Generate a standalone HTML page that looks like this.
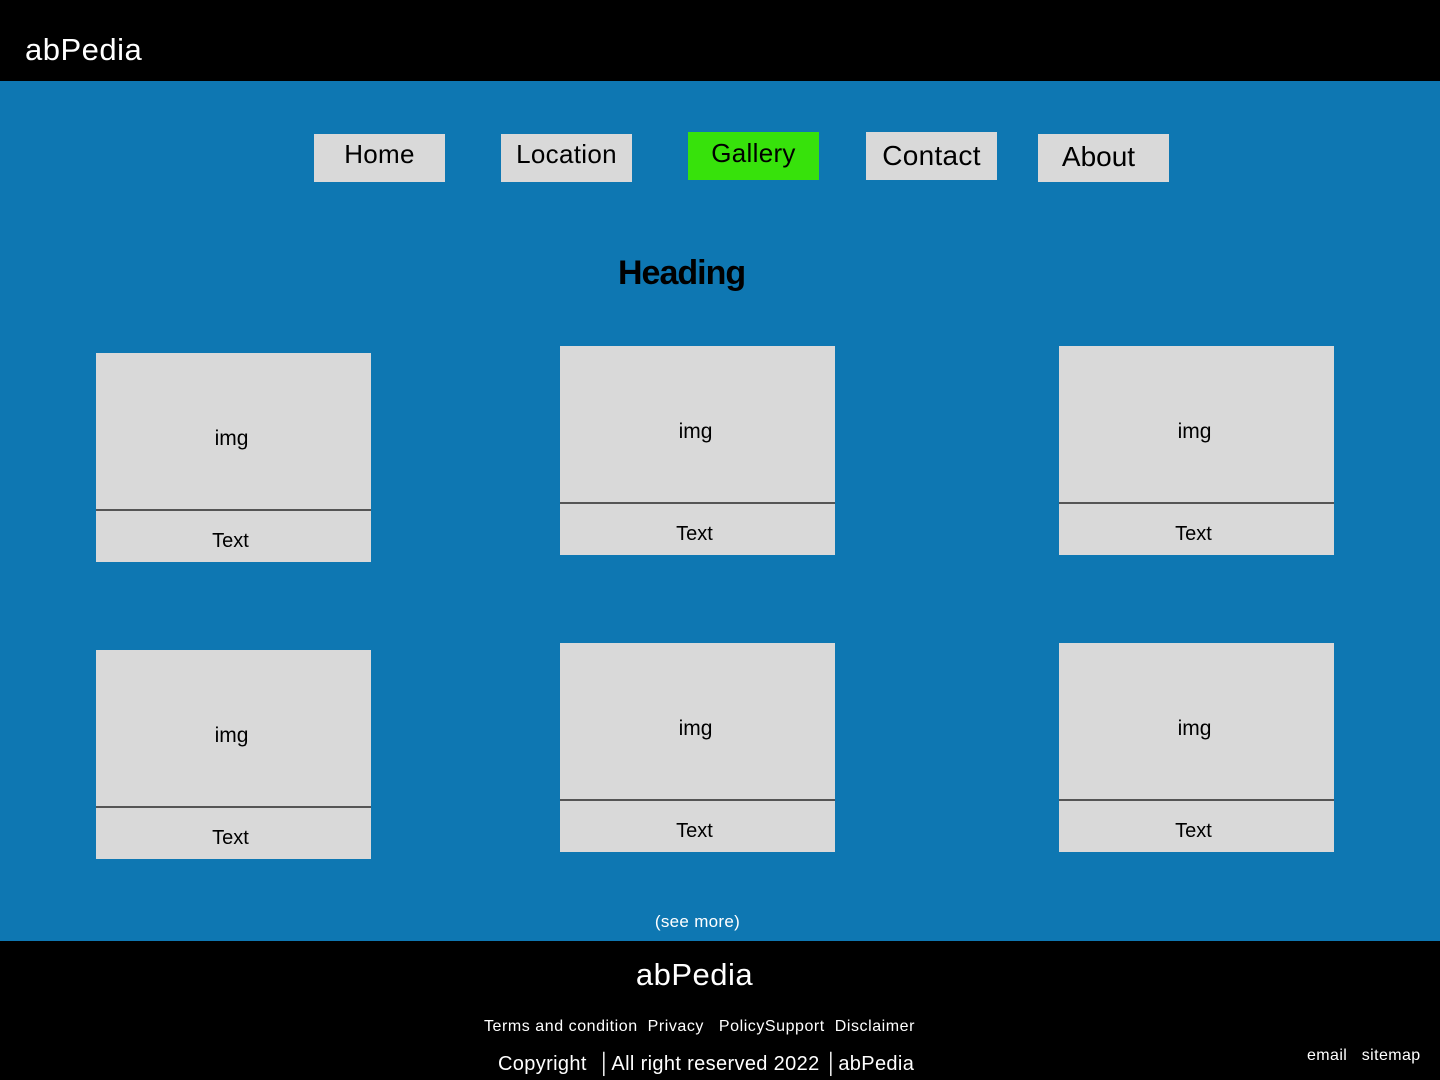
<!DOCTYPE html>
<html><head><style>
*{margin:0;padding:0;box-sizing:border-box}
body{width:1440px;height:1080px;background:#0e77b2;font-family:"Liberation Sans",sans-serif;position:relative;overflow:hidden}
.a{position:absolute}
.hdr{left:0;top:0;width:1440px;height:81px;background:#000}
.nav{background:#d9d9d9;height:48px;width:131px;font-size:26px;text-align:center;color:#000}
.card{width:275px;height:209px;background:#d9d9d9}
.card .i{height:158px;border-bottom:2px solid #555;text-align:center;line-height:172px;font-size:21px;padding-right:4px}
.card .t{text-align:center;font-size:20px;line-height:60px;padding-right:6px}
.ft{left:0;top:941px;width:1440px;height:139px;background:#000;color:#fff}
</style></head><body>
<div class="a hdr"></div>
<div class="a" style="left:25px;top:32px;color:#fff;font-size:31px;letter-spacing:0.5px">abPedia</div>
<div class="a nav" style="left:314px;top:134px;padding-top:5px;letter-spacing:0.3px">Home</div>
<div class="a nav" style="left:501px;top:134px;padding-top:5px;letter-spacing:0.3px">Location</div>
<div class="a nav" style="left:688px;top:132px;padding-top:6px;background:#37e20b;letter-spacing:0.3px">Gallery</div>
<div class="a nav" style="left:866px;top:132px;padding-top:8px;font-size:28px;letter-spacing:0.3px">Contact</div>
<div class="a nav" style="left:1038px;top:134px;padding-top:7px;font-size:28px;padding-right:10px">About</div>
<div class="a" style="left:618px;top:254px;font-size:34px;font-weight:bold;letter-spacing:-1px">Heading</div>
<div class="a card" style="left:96px;top:353px"><div class="i">img</div><div class="t">Text</div></div>
<div class="a card" style="left:560px;top:346px"><div class="i">img</div><div class="t">Text</div></div>
<div class="a card" style="left:1059px;top:346px"><div class="i">img</div><div class="t">Text</div></div>
<div class="a card" style="left:96px;top:650px"><div class="i">img</div><div class="t">Text</div></div>
<div class="a card" style="left:560px;top:643px"><div class="i">img</div><div class="t">Text</div></div>
<div class="a card" style="left:1059px;top:643px"><div class="i">img</div><div class="t">Text</div></div>
<div class="a" style="left:0;width:1395px;text-align:center;top:912px;color:#fff;font-size:17px;letter-spacing:0.3px">(see more)</div>
<div class="a ft"></div>
<div class="a" style="left:0;width:1389px;text-align:center;top:957px;color:#fff;font-size:31px;letter-spacing:0.5px">abPedia</div>
<div class="a" style="left:484px;top:1018px;color:#fff;font-size:16px;white-space:pre;letter-spacing:0.55px">Terms and condition  Privacy   PolicySupport  Disclaimer</div>
<div class="a" style="left:498px;top:1053px;color:#fff;font-size:20px;white-space:pre;letter-spacing:0.35px">Copyright  │All right reserved 2022 │abPedia</div>
<div class="a" style="left:1307px;top:1047px;color:#fff;font-size:16px;white-space:pre;letter-spacing:0.4px">email   sitemap</div>
</body></html>
